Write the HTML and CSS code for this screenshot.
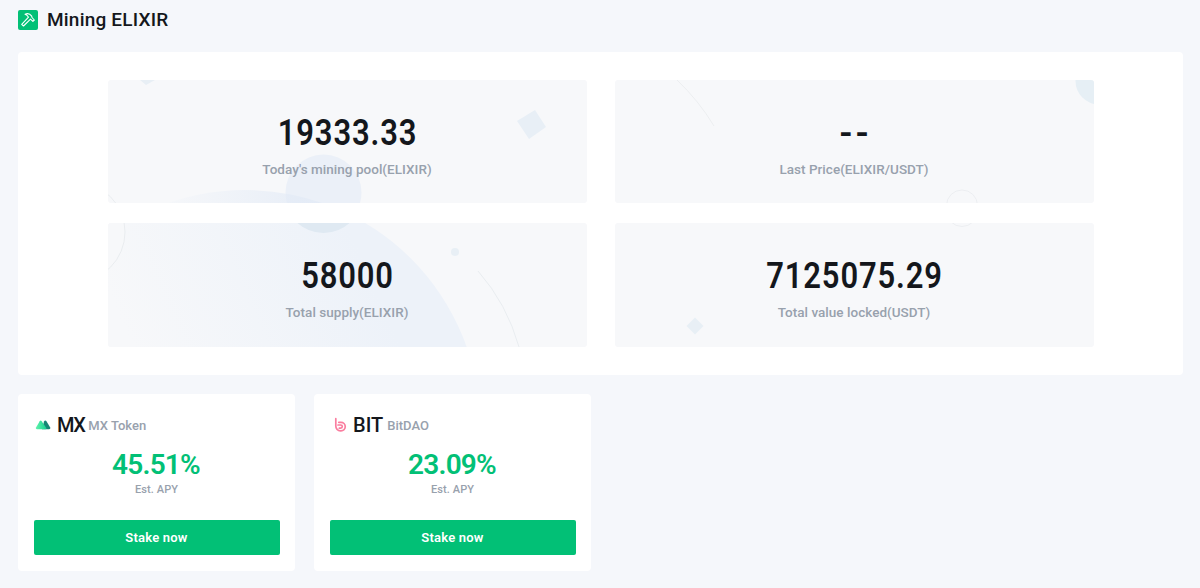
FILE: index.html
```html
<!DOCTYPE html>
<html lang="en">
<head>
  <meta charset="UTF-8" />
  <meta name="viewport" content="width=device-width, initial-scale=1.0"/>
  <title>Mining ELIXIR</title>
  <link rel="stylesheet" href="styles.css">
</head>
<body>

  <header class="page-title">
    <svg class="title-icon" viewBox="0 0 20 20">
      <rect width="20" height="20" rx="2" fill="#02c076"/>
      <path d="M7 4.2 C9.6 3 12.3 4.1 13.7 6.1 L14 7.5 L16.3 10 L14.9 11.4 L12.5 9.1 L5.5 16 L3.7 14.3 L10.5 7.2 C9.7 5.7 8.7 4.8 7 4.2 Z" fill="none" stroke="#fff" stroke-width="1.1" stroke-linejoin="round"/>
    </svg>
    <h1>Mining ELIXIR</h1>
  </header>

  <section class="stats">
    <div class="stat">
      <svg class="stat-bg" viewBox="108 80 479 123">
        <defs>
          <linearGradient id="horizon" gradientUnits="userSpaceOnUse" x1="165" y1="0" x2="300" y2="0">
            <stop offset="0" stop-color="#e6edf7" stop-opacity="0.1"/>
            <stop offset="1" stop-color="#e2eaf6" stop-opacity="0.7"/>
          </linearGradient>
        </defs>
        <path d="M140 80 H155 L146 85 Z" fill="#e8eff5"/>
        <path d="M517 121 L535 110 L546 127 L529 139 Z" fill="#e8eff6"/>
        <circle cx="323.5" cy="192.500" r="38" fill="#ebf0f8"/>
        <circle cx="245" cy="425" r="235" fill="url(#horizon)"/>
        <circle cx="75" cy="232" r="50" fill="none" stroke="#e9ecef"/>
      </svg>
      <div class="value">19333.33</div>
      <div class="label">Today's mining pool(ELIXIR)</div>
    </div>
    <div class="stat">
      <svg class="stat-bg" viewBox="615 80 479 123">
        <path d="M677 80 Q699 101 714 126" fill="none" stroke="#eceef0"/>
        <circle cx="1099" cy="81" r="23.5" fill="#e6eff5"/>
        <circle cx="962" cy="205.500" r="15.500" fill="none" stroke="#eceef1"/>
      </svg>
      <div class="value dashes">--</div>
      <div class="label">Last Price(ELIXIR/USDT)</div>
    </div>
    <div class="stat">
      <svg class="stat-bg" viewBox="108 223 479 124">
        <defs>
          <linearGradient id="planet" gradientUnits="userSpaceOnUse" x1="125" y1="330" x2="350" y2="230">
            <stop offset="0" stop-color="#f7f8fa"/>
            <stop offset="1" stop-color="#edf2f9"/>
          </linearGradient>
        </defs>
        <circle cx="245" cy="425" r="235" fill="url(#planet)"/>
        <circle cx="323.5" cy="194" r="39" fill="#dfe9f2"/>
        <circle cx="75" cy="232" r="50" fill="#f7f8fa" stroke="#e9ecef"/>
        <circle cx="455" cy="252" r="4" fill="#e8eff5"/>
        <path d="M478 271 Q507 304 519 347" fill="none" stroke="#e9edf0"/>
      </svg>
      <div class="value">58000</div>
      <div class="label">Total supply(ELIXIR)</div>
    </div>
    <div class="stat">
      <svg class="stat-bg" viewBox="615 223 479 124">
        <path d="M695 317.500 L703.500 326 L695 334.500 L686.500 326 Z" fill="#e8eff5"/>
        <circle cx="962" cy="211" r="15.500" fill="none" stroke="#eceef1"/>
      </svg>
      <div class="value">7125075.29</div>
      <div class="label">Total value locked(USDT)</div>
    </div>
  </section>

  <section class="pools">
    <div class="pool-card">
      <div class="token">
        <svg class="token-icon" viewBox="0 0 18 18">
          <defs>
            <linearGradient id="mx" x1="0" y1="0" x2="1" y2="0">
              <stop offset="0" stop-color="#62f3ac"/>
              <stop offset="1" stop-color="#16cf91"/>
            </linearGradient>
          </defs>
          <path d="M10 5.500 Q11.300 3.500 12.600 5.500 L16.200 11.600 Q16.900 13.300 15 13.300 H8 Z" fill="#148575"/>
          <path d="M2 11.500 L5.700 5.200 Q6.700 3.900 7.700 5.200 L12.300 12 Q13 13.300 11.300 13.300 H3 Q1.200 13.300 2 11.500 Z" fill="url(#mx)"/>
        </svg>
        <span class="symbol symbol-mx">MX</span>
        <span class="name">MX Token</span>
      </div>
      <div class="apy">45.51%</div>
      <div class="apy-label">Est. APY</div>
      <button>Stake now</button>
    </div>
    <div class="pool-card">
      <div class="token">
        <svg class="token-icon" viewBox="0 0 18 18">
          <g fill="none" stroke="#fa7d9f" stroke-width="1.7" stroke-linecap="round">
            <path d="M5.800 2.700 V9.800 A4.700 4.700 0 0 0 10.500 14.800 H11 A4.200 4.200 0 0 0 11 6.300 H8.800"/>
            <path d="M8 9 H10.700 A1.600 1.600 0 0 1 10.700 12.200 H9.300"/>
          </g>
        </svg>
        <span class="symbol">BIT</span>
        <span class="name">BitDAO</span>
      </div>
      <div class="apy">23.09%</div>
      <div class="apy-label">Est. APY</div>
      <button>Stake now</button>
    </div>
  </section>

</body>
</html>
```
FILE: styles.css
```css
* {
  box-sizing: border-box;
}

body {
  margin: 0;
  padding: 8px 17px 0 18px;
  background-color: #f5f7fb;
  color: #14171c;
  font-family: Roboto, "Liberation Sans", sans-serif;
  font-weight: 500;
}

.page-title {
  display: flex;
  align-items: center;
  gap: 9px;
  height: 24px;
}

.title-icon {
  width: 20px;
  height: 20px;
}

h1 {
  margin: 0;
  font-size: 19px;
  font-weight: 500;
  line-height: 24px;
  letter-spacing: 0.2px;
}

.stats {
  display: grid;
  grid-template-columns: 479px 479px;
  grid-template-rows: 123px 124px;
  gap: 20px 28px;
  justify-content: center;
  margin-top: 20px;
  padding: 28px 0;
  background: #fff;
  border-radius: 4px;
}

.stat {
  position: relative;
  overflow: hidden;
  padding-top: 32px;
  background: #f7f8fa;
  border-radius: 3px;
  text-align: center;
}

.stat-bg {
  position: absolute;
  inset: 0;
  width: 100%;
  height: 100%;
}

.value, .label {
  position: relative;
}

/* condensed digits */
.value {
  font-size: 36px;
  font-weight: 600;
  line-height: 42px;
  letter-spacing: 1px;
  transform: scaleX(0.86);
}

.dashes {
  padding-left: 3px;
  letter-spacing: 3px;
  transform: none;
}

.label {
  margin-top: 6px;
  font-size: 13.5px;
  line-height: 18px;
  letter-spacing: 0.03px;
  color: #98a1ad;
}

.pools {
  display: flex;
  gap: 19px;
  margin-top: 19px;
}

.pool-card {
  width: 277px;
  height: 177px;
  padding: 19px 15px 16px 16px;
  background: #fff;
  border-radius: 4px;
  text-align: center;
}

.token {
  display: flex;
  align-items: center;
  height: 24px;
}

.token-icon {
  width: 18px;
  height: 18px;
  margin-right: 5px;
}

.symbol {
  font-size: 20px;
}

.symbol-mx {
  letter-spacing: -1.5px;
}

.name {
  margin-left: 4px;
  font-size: 13px;
  color: #98a1ad;
}

.apy {
  margin: 11px 2px 0 0;
  font-size: 28px;
  font-weight: 600;
  line-height: 34px;
  letter-spacing: -0.8px;
  color: #02c076;
}

.apy-label {
  margin-right: 1px;
  font-size: 11px;
  line-height: 16px;
  letter-spacing: 0.1px;
  color: #98a1ad;
}

button {
  display: block;
  width: 100%;
  height: 35px;
  margin-top: 22px;
  padding: 0 1px 0 0;
  border: none;
  border-radius: 2px;
  background-color: #02c076;
  color: #fff;
  font: 600 13px Roboto, "Liberation Sans", sans-serif;
  letter-spacing: 0.2px;
  cursor: pointer;
}
```
